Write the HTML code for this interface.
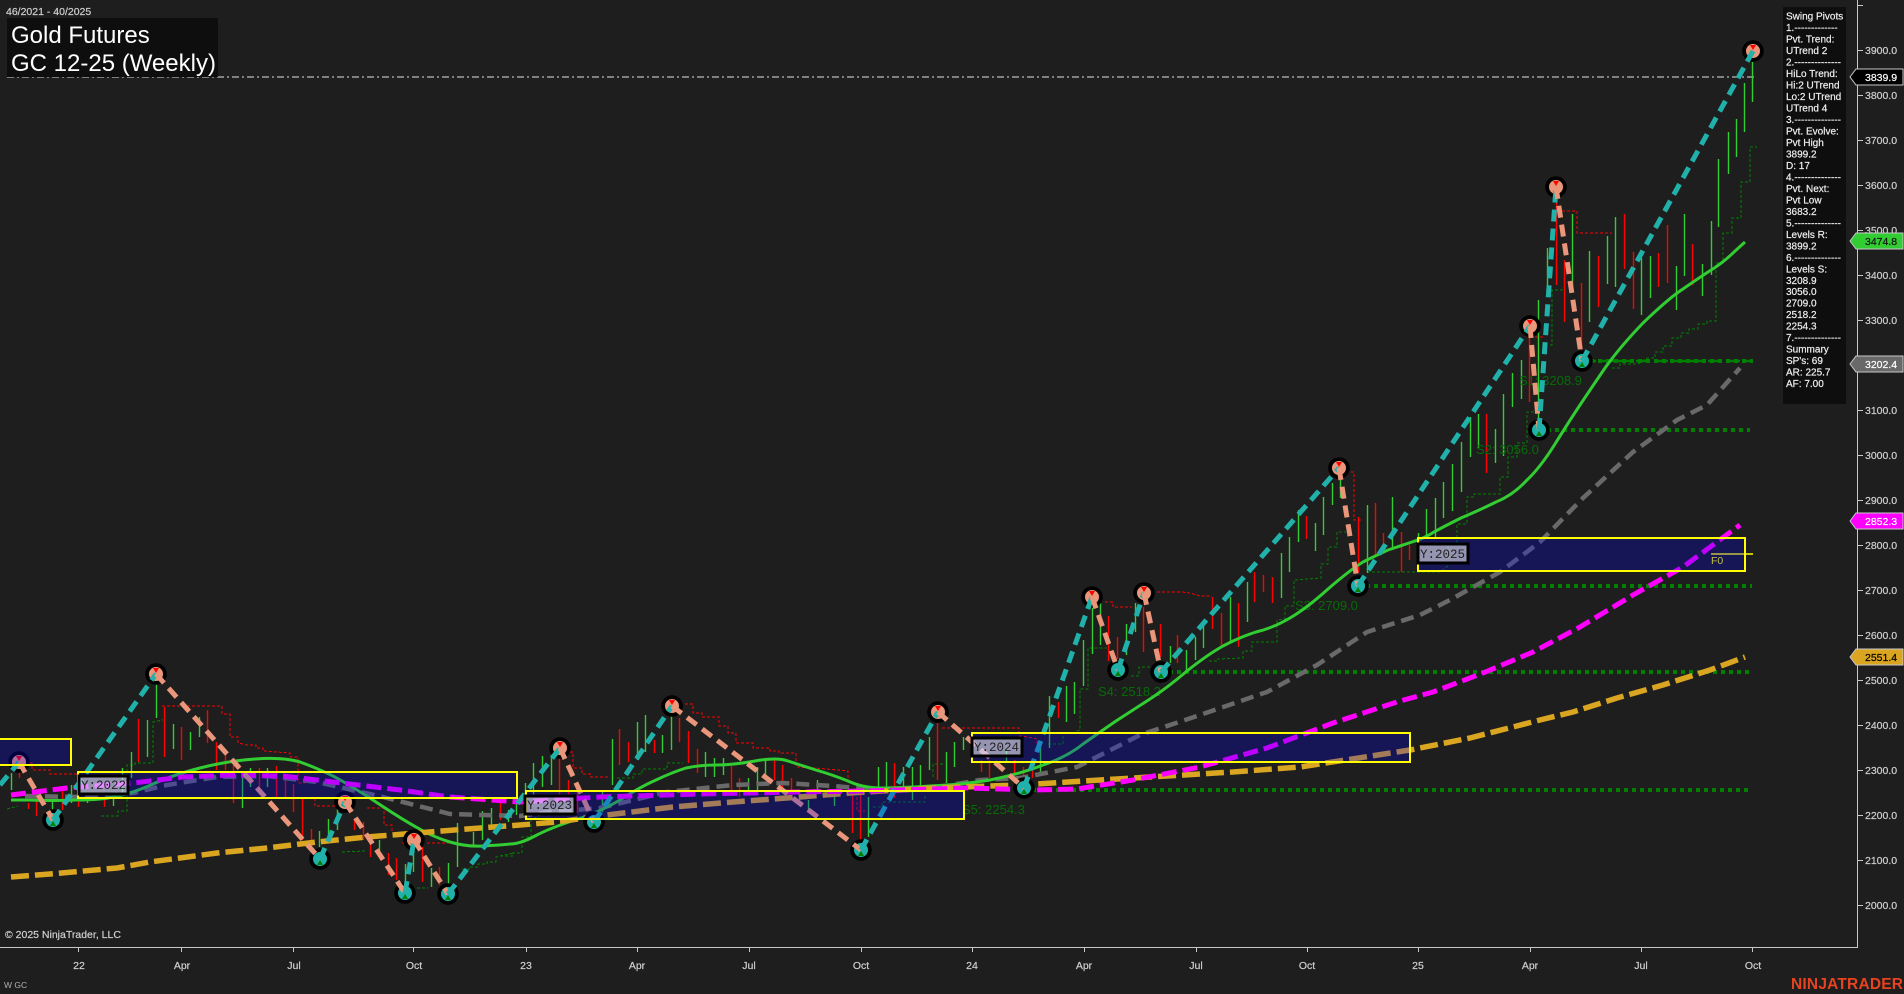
<!DOCTYPE html>
<html lang="en"><head><meta charset="utf-8"><title>GC 12-25 (Weekly)</title>
<style>
html,body{margin:0;padding:0;width:1904px;height:994px;background:#1e1e1e;overflow:hidden}
svg{display:block;font-family:"Liberation Sans",sans-serif}
.ax{font-size:10.5px;fill:#cfcfcf;stroke:#cfcfcf;stroke-width:.2px}
.sl{font-size:13px;fill:#066b06}
.pv{font-size:10px;fill:#efefef;stroke:#efefef;stroke-width:.2px}
.yl{font-family:"Liberation Mono",monospace;font-size:12.5px;fill:#222}
.yr{fill:rgba(255,255,255,.55);stroke:#000;stroke-width:3}
.z{fill:rgba(0,0,255,.25);stroke:#ff0;stroke-width:2}
.t{stroke:#20b2aa;stroke-width:5;stroke-dasharray:12 7;fill:none}
.s{stroke:#e9967a;stroke-width:5;stroke-dasharray:12 7;fill:none}
.sup{stroke:#008000;stroke-width:4;stroke-dasharray:4 4;fill:none}
.hi{fill:#e9967a;stroke:#000;stroke-width:3.8}
.lo{fill:#20b2aa;stroke:#000;stroke-width:3.8}
</style></head><body>
<svg width="1904" height="994" viewBox="0 0 1904 994" xmlns="http://www.w3.org/2000/svg">
<rect width="1904" height="994" fill="#1e1e1e"/>

<!-- close line -->
<path d="M7 77H1756" stroke="#a0a0a0" stroke-width="1.4" stroke-dasharray="7 3 2 3" fill="none"/>

<!-- trails -->
<g fill="none" stroke-width="1" stroke-dasharray="3 2" shape-rendering="crispEdges">
<path stroke="#ff0000" d="M25 763H32V770H50V774H78M162 706H222V714H230V737H238V743L247 745H256V748H263V751L290 753V757H298V783H305M315 798V806H345M367 808H384V825H392V833M402 843H408M427 843H457M565 752H573V768H582V774H591V777H610M685 704H693V713H702V717H719V726H728V733H736V743H753V748H770V751H779V753H796V767L815 768L848 771V780M857 797V811H865M942 728H1019V736L1028 737L1037 739V748M1105 602H1113V607H1132M1157 592H1182L1190 593L1200 596H1212M1341 472H1354V520H1362M1557 211H1577V233H1612M1535 337H1545"/>
<path stroke="#008000" d="M7 809L18 806M101 816H118V811H127V765H135V763H153V722L163 720M342 852L365 851M412 888H428M462 869H470V867H478V864H487V862H496V857L513 853M500 856H513V853H522V837H531V820L540 815M617 778H633V774H642V769H667V763H683M873 807H882V802H925V795M933 777V764H945M1048 744H1063V733H1072L1080 730V689H1088V648H1107M1131 676H1139V667H1158M1209 661H1217V659L1243 658V651H1252V642H1277V620L1285 619V606H1294V580L1321 578V564H1328V547H1337V532H1346M1367 572H1440L1448 566V545H1457V524H1467V497H1474V494H1500V477H1508V457H1517V443H1527V412H1535M1550 345H1552V290H1563M1612 368H1620V364H1638L1647 358H1655V352H1663V346H1672V338H1681V333H1689V329H1698V324H1707V321H1716V263H1723V233H1732V218H1741V182H1750V147H1757"/>
</g>

<!-- bars -->
<g transform="translate(.5 0)">
<path fill="none" stroke="#32cd32" stroke-width="1.4" d="M11 773V790M52 802V813M71 785V803M87 793V803M113 798V806M122 768V793M131 752V778M147 720V757M156 683V718M173 724V749M190 732V750M199 717V737M242 773V808M250 768V787M267 768V787M319 831V847M328 819V840M337 807V830M379 840V853M405 864V882M413 847V872M431 868V887M448 863V888M457 823V867M473 832V847M482 811V840M491 808V830M508 810V822M516 797V815M525 783V810M533 763V795M542 756V787M551 755V785M602 792V812M612 739V785M637 722V760M645 715V752M662 735V753M671 712V750M705 752V777M714 758V777M723 758V775M748 778V793M757 767V790M765 758V777M808 800V810M817 780V793M834 790V806M868 797V837M878 767V790M886 762V790M903 767V790M912 767V800M920 765V790M929 737V770M946 752V783M954 742V767M963 737V750M1006 750V763M1040 747V773M1049 696V748M1066 686V722M1074 682V714M1083 640V686M1092 605V654M1100 603V645M1126 624V655M1135 603V632M1170 646V663M1186 650V670M1195 637V660M1203 623V648M1230 597V643M1247 582V622M1281 553V598M1289 537V572M1298 510V542M1315 523V551M1323 497V535M1332 483V505M1340 480V498M1367 505V573M1392 497V547M1418 533V550M1426 509V538M1435 498V537M1443 482V518M1452 464V511M1461 442V492M1470 417V457M1478 414V448M1495 429V463M1503 394V456M1512 373V407M1521 360V399M1538 300V430M1547 248V290M1572 214V290M1589 251V322M1607 236V284M1615 217V287M1641 258V315M1650 256V298M1676 266V310M1684 214V276M1702 264V296M1711 221V275M1718 159V227M1728 132V174M1736 119V157M1744 83V132M1752 62V102"/>
<path fill="none" stroke="#ff0000" stroke-width="1.4" d="M19 763V778M28 803V809M36 797V816M62 787V810M78 797V807M104 797V807M138 719V762M164 707V757M181 727V760M207 710V743M216 742V770M225 753V770M233 765V803M259 768V787M276 766V797M285 780V797M293 784V812M302 798V840M311 829V852M354 820V830M363 822V840M370 840V857M388 853V875M396 858V880M422 847V882M439 867V885M500 803V820M559 758V797M568 780V795M577 790V813M619 729V765M628 742V762M654 740V753M679 718V742M688 731V763M697 749V773M731 766V790M739 778V797M774 760V780M782 765V790M791 778V790M852 790V833M860 795V840M894 763V798M937 723V780M981 760V772M989 760V778M1014 760V773M1023 767V777M1032 765V778M1058 702V718M1108 616V661M1117 637V660M1143 607V652M1160 624V657M1177 635V663M1212 597V629M1221 613V648M1238 603V647M1254 572V602M1263 575V592M1272 577V603M1306 516V539M1358 517V573M1375 503V555M1383 533V552M1401 532V572M1409 545V560M1486 414V473M1529 327V402M1556 200V285M1564 260V322M1581 283V353M1598 256V307M1624 214V269M1633 252V309M1658 253V287M1667 225V283M1692 244V285"/>
</g>

<!-- support labels -->
<text class="sl" x="1519" y="385">S1: 3208.9</text>
<text class="sl" x="1476" y="454">S2: 3056.0</text>
<text class="sl" x="1295" y="610">S3: 2709.0</text>
<text class="sl" x="1098" y="696">S4: 2518.2</text>
<text class="sl" x="962" y="814">S5: 2254.3</text>

<!-- supports -->
<path class="sup" d="M1582 361H1753"/>
<path d="M1582 361H1753" stroke="#008000" stroke-width="2.5" stroke-dasharray="14 4" fill="none"/>
<path class="sup" d="M1539 430H1750M1358 586H1752M1161 672H1752M1024 790H1752"/>

<!-- MAs -->
<path fill="none" stroke="#696969" stroke-width="4.5" stroke-linejoin="round" stroke-dasharray="13 7" d="M25 796L83 797L133 793L167 785L217 777L267 776L317 782L383 797L450 814L520 816L550 812L600 808L667 792L733 785L783 783L833 786L867 789L933 788L980 780L1020 778L1077 767L1140 735L1200 715L1267 692L1317 665L1367 632L1420 615L1450 600L1500 572L1540 542L1583 498L1633 452L1677 420L1707 405L1740 368"/>
<path fill="none" stroke="#32cd32" stroke-width="3" stroke-linejoin="round" d="M11 800L30 800Q50 801 76 800Q103 800 118 796Q133 793 153 784Q173 775 200 768Q227 761 255 759Q283 757 300 762Q317 768 335 777Q353 787 376 802Q400 818 416 827Q433 837 450 842Q467 847 483 846Q500 845 510 844Q520 844 535 836Q550 828 575 820Q600 812 620 800Q640 787 656 780Q673 772 686 768Q700 765 716 765Q733 765 755 761Q777 757 788 761Q800 765 816 770Q833 775 848 781Q863 788 881 788Q900 788 930 786Q960 785 990 780Q1020 774 1043 765Q1067 757 1083 744Q1100 732 1116 721Q1133 710 1150 699Q1167 688 1187 671Q1207 655 1223 646Q1240 637 1256 632Q1273 628 1290 618Q1307 608 1328 589Q1350 570 1363 562Q1377 555 1388 550Q1400 546 1412 542Q1425 538 1434 532Q1443 527 1461 518Q1480 510 1496 502Q1513 495 1526 481Q1540 468 1555 444Q1570 420 1580 405Q1590 390 1605 368Q1620 347 1643 323Q1667 300 1680 291Q1693 282 1708 272Q1723 263 1734 252L1745 242"/>
<path fill="none" stroke="#daa520" stroke-width="5.5" stroke-linejoin="round" stroke-dasharray="18 6" d="M11 877L50 874L117 868L150 862L217 853L267 848L317 842L367 837L417 833L467 829L520 825L557 822L607 815L673 807L733 802L800 797L850 793L933 788L1020 785L1100 780L1167 776L1233 772L1300 767L1410 750L1470 738L1540 720L1573 712L1617 698L1663 685L1710 670L1745 657"/>
<path fill="none" stroke="#ff00ff" stroke-width="5" stroke-linejoin="round" stroke-dasharray="15 6" d="M11 795L67 788L133 783L183 777L233 775L283 776L333 782L400 790L450 797L520 802L600 797L700 794L800 792L867 791L967 788L1033 790L1077 789L1133 780L1200 767L1267 748L1333 723L1400 701L1433 692L1483 673L1533 652L1580 627L1633 595L1683 567L1740 525"/>

<!-- F0 line -->
<path d="M1711 554H1753" stroke="#ff0" stroke-width="1.5"/>
<text x="1711" y="564" font-size="10.5" fill="#ff0">F0</text>

<!-- pivots -->
<g>
<circle class="hi" cx="19" cy="762" r="8.9"/><circle class="lo" cx="53" cy="820" r="8.9"/>
<circle class="hi" cx="156" cy="674" r="8.9"/><circle class="lo" cx="320" cy="859" r="8.9"/>
<circle class="hi" cx="345" cy="802" r="8.9"/><circle class="lo" cx="405" cy="893" r="8.9"/>
<circle class="hi" cx="414" cy="840" r="8.9"/><circle class="lo" cx="448" cy="894" r="8.9"/>
<circle class="hi" cx="560" cy="748" r="8.9"/><circle class="lo" cx="594" cy="822" r="8.9"/>
<circle class="hi" cx="672" cy="706" r="8.9"/><circle class="lo" cx="861" cy="850" r="8.9"/>
<circle class="hi" cx="938" cy="712" r="8.9"/><circle class="lo" cx="1024" cy="788" r="8.9"/>
<circle class="hi" cx="1092" cy="597" r="8.9"/><circle class="lo" cx="1118" cy="670" r="8.9"/>
<circle class="hi" cx="1144" cy="593" r="8.9"/><circle class="lo" cx="1161" cy="672" r="8.9"/>
<circle class="hi" cx="1339" cy="468" r="8.9"/><circle class="lo" cx="1358" cy="586" r="8.9"/>
<circle class="hi" cx="1530" cy="326" r="8.9"/><circle class="lo" cx="1539" cy="430" r="8.9"/>
<circle class="hi" cx="1556" cy="187" r="8.9"/><circle class="lo" cx="1582" cy="361" r="8.9"/>
<circle class="hi" cx="1753" cy="51" r="8.9"/>
</g>
<path fill="#ff0000" d="M16 756h6l-3 5zM153 668h6l-3 5zM342 796h6l-3 5zM411 834h6l-3 5zM557 742h6l-3 5zM669 700h6l-3 5zM935 706h6l-3 5zM1089 591h6l-3 5zM1141 587h6l-3 5zM1336 462h6l-3 5zM1527 320h6l-3 5zM1553 181h6l-3 5zM1750 45h6l-3 5z"/>
<path fill="#008000" d="M50 826h6l-3-5zM317 865h6l-3-5zM402 899h6l-3-5zM445 900h6l-3-5zM591 828h6l-3-5zM858 856h6l-3-5zM1021 794h6l-3-5zM1115 676h6l-3-5zM1158 678h6l-3-5zM1355 592h6l-3-5zM1536 436h6l-3-5zM1579 367h6l-3-5z"/>

<!-- swing lines -->
<path class="t" d="M0 785L19 762"/><path class="s" d="M19 762L53 820"/><path class="t" d="M53 820L156 674"/><path class="s" d="M156 674L320 859"/><path class="t" d="M320 859L345 802"/><path class="s" d="M345 802L405 893"/><path class="t" d="M405 893L414 840"/><path class="s" d="M414 840L448 894"/><path class="t" d="M448 894L560 748"/><path class="s" d="M560 748L594 822"/><path class="t" d="M594 822L672 706"/><path class="s" d="M672 706L861 850"/><path class="t" d="M861 850L938 712"/><path class="s" d="M938 712L1024 788"/><path class="t" d="M1024 788L1092 597"/><path class="s" d="M1092 597L1118 670"/><path class="t" d="M1118 670L1144 593"/><path class="s" d="M1144 593L1161 672"/><path class="t" d="M1161 672L1339 468"/><path class="s" d="M1339 468L1358 586"/><path class="t" d="M1358 586L1530 326"/><path class="s" d="M1530 326L1539 430"/><path class="t" d="M1539 430L1556 187"/><path class="s" d="M1556 187L1582 361"/><path class="t" d="M1582 361L1753 51"/>

<!-- zones -->
<rect class="z" x="-3" y="739" width="74" height="26"/>
<rect class="z" x="78" y="772" width="439" height="26"/>
<rect class="z" x="526" y="791" width="438" height="28"/>
<rect class="z" x="972" y="733" width="438" height="29"/>
<rect class="z" x="1418" y="538" width="327" height="33"/>
<rect class="yr" x="79" y="776" width="49" height="18"/><text class="yl" x="81" y="789">Y:2022</text>
<rect class="yr" x="525" y="796" width="50" height="18"/><text class="yl" x="527" y="809">Y:2023</text>
<rect class="yr" x="972" y="738" width="50" height="18"/><text class="yl" x="974" y="751">Y:2024</text>
<rect class="yr" x="1418" y="544" width="50" height="19"/><text class="yl" x="1420" y="558">Y:2025</text>

<!-- axes -->
<path d="M1857.5 0V947.5H0" fill="none" stroke="#c8c8c8" stroke-width="1"/>
<path fill="none" stroke="#c8c8c8" stroke-width="1" d="M1857 5.5h6M1857 50.5h6M1857 95.5h6M1857 140.5h6M1857 185.5h6M1857 230.5h6M1857 275.5h6M1857 320.5h6M1857 365.5h6M1857 410.5h6M1857 455.5h6M1857 500.5h6M1857 545.5h6M1857 590.5h6M1857 635.5h6M1857 680.5h6M1857 725.5h6M1857 770.5h6M1857 815.5h6M1857 860.5h6M1857 905.5h6M78.5 947v5M181.5 947v5M293.5 947v5M413.5 947v5M526.5 947v5M637.5 947v5M749.5 947v5M861.5 947v5M972.5 947v5M1084.5 947v5M1196.5 947v5M1307.5 947v5M1418.5 947v5M1530.5 947v5M1641.5 947v5M1752.5 947v5"/>
<g class="ax">
<text x="1865" y="54">3900.0</text><text x="1865" y="99">3800.0</text><text x="1865" y="144">3700.0</text><text x="1865" y="189">3600.0</text><text x="1865" y="234">3500.0</text><text x="1865" y="279">3400.0</text><text x="1865" y="324">3300.0</text><text x="1865" y="414">3100.0</text><text x="1865" y="459">3000.0</text><text x="1865" y="504">2900.0</text><text x="1865" y="549">2800.0</text><text x="1865" y="594">2700.0</text><text x="1865" y="639">2600.0</text><text x="1865" y="684">2500.0</text><text x="1865" y="729">2400.0</text><text x="1865" y="774">2300.0</text><text x="1865" y="819">2200.0</text><text x="1865" y="864">2100.0</text><text x="1865" y="909">2000.0</text>
</g>
<g class="ax" text-anchor="middle">
<text x="79" y="969">22</text><text x="182" y="969">Apr</text><text x="294" y="969">Jul</text><text x="414" y="969">Oct</text><text x="526" y="969">23</text><text x="637" y="969">Apr</text><text x="749" y="969">Jul</text><text x="861" y="969">Oct</text><text x="972" y="969">24</text><text x="1084" y="969">Apr</text><text x="1196" y="969">Jul</text><text x="1307" y="969">Oct</text><text x="1418" y="969">25</text><text x="1530" y="969">Apr</text><text x="1641" y="969">Jul</text><text x="1753" y="969">Oct</text>
</g>

<!-- price tags -->
<g stroke="#c8c8c8" stroke-width="1">
<path fill="#000" d="M1850 77L1856 69H1903V85H1856Z"/>
<path fill="#32cd32" d="M1850 241L1856 233H1903V249H1856Z"/>
<path fill="#696969" d="M1850 364L1856 356H1903V372H1856Z"/>
<path fill="#ff00ff" d="M1850 521L1856 513H1903V529H1856Z"/>
<path fill="#daa520" d="M1850 657L1856 649H1903V665H1856Z"/>
</g>
<g font-size="10.5">
<text x="1865" y="81" fill="#fff" stroke="#fff" stroke-width=".2">3839.9</text>
<text x="1865" y="245" fill="#111" stroke="#111" stroke-width=".2">3474.8</text>
<text x="1865" y="368" fill="#fff" stroke="#fff" stroke-width=".2">3202.4</text>
<text x="1865" y="525" fill="#fff" stroke="#fff" stroke-width=".2">2852.3</text>
<text x="1865" y="661" fill="#000" stroke="#000" stroke-width=".2">2551.4</text>
</g>

<!-- header -->
<text x="6" y="15" class="ax">46/2021 - 40/2025</text>
<rect x="7" y="18" width="211" height="59" fill="#0e0e0e"/>
<text x="11" y="43" font-size="24" fill="#fff">Gold Futures</text>
<text x="11" y="71" font-size="24" fill="#fff">GC 12-25 (Weekly)</text>

<!-- swing pivots panel -->
<rect x="1783" y="7" width="63" height="397" fill="#0e0e0e"/>
<g class="pv">
<text x="1786" y="19.5">Swing Pivots</text>
<text x="1786" y="31">1.-------------</text>
<text x="1786" y="42.5">Pvt. Trend:</text>
<text x="1786" y="54">UTrend 2</text>
<text x="1786" y="65.5">2.--------------</text>
<text x="1786" y="77">HiLo Trend:</text>
<text x="1786" y="88.4">Hi:2 UTrend</text>
<text x="1786" y="99.9">Lo:2 UTrend</text>
<text x="1786" y="111.4">UTrend 4</text>
<text x="1786" y="122.9">3.--------------</text>
<text x="1786" y="134.4">Pvt. Evolve:</text>
<text x="1786" y="145.9">Pvt High</text>
<text x="1786" y="157.4">3899.2</text>
<text x="1786" y="168.9">D: 17</text>
<text x="1786" y="180.4">4.--------------</text>
<text x="1786" y="191.8">Pvt. Next:</text>
<text x="1786" y="203.3">Pvt Low</text>
<text x="1786" y="214.8">3683.2</text>
<text x="1786" y="226.3">5.--------------</text>
<text x="1786" y="237.8">Levels R:</text>
<text x="1786" y="249.3">3899.2</text>
<text x="1786" y="260.8">6.--------------</text>
<text x="1786" y="272.3">Levels S:</text>
<text x="1786" y="283.8">3208.9</text>
<text x="1786" y="295.2">3056.0</text>
<text x="1786" y="306.7">2709.0</text>
<text x="1786" y="318.2">2518.2</text>
<text x="1786" y="329.7">2254.3</text>
<text x="1786" y="341.2">7.--------------</text>
<text x="1786" y="352.7">Summary</text>
<text x="1786" y="364.2">SP's: 69</text>
<text x="1786" y="375.7">AR: 225.7</text>
<text x="1786" y="387.2">AF: 7.00</text>
</g>

<!-- footer -->
<text x="5" y="938" class="ax">© 2025 NinjaTrader, LLC</text>
<text x="4" y="988" font-size="8.5" fill="#b0b0b0">W GC</text>
<text x="1791" y="989" font-size="15.5" font-weight="bold" fill="#e8431f" textLength="112" lengthAdjust="spacing">NINJATRADER</text>
</svg>
</body></html>
